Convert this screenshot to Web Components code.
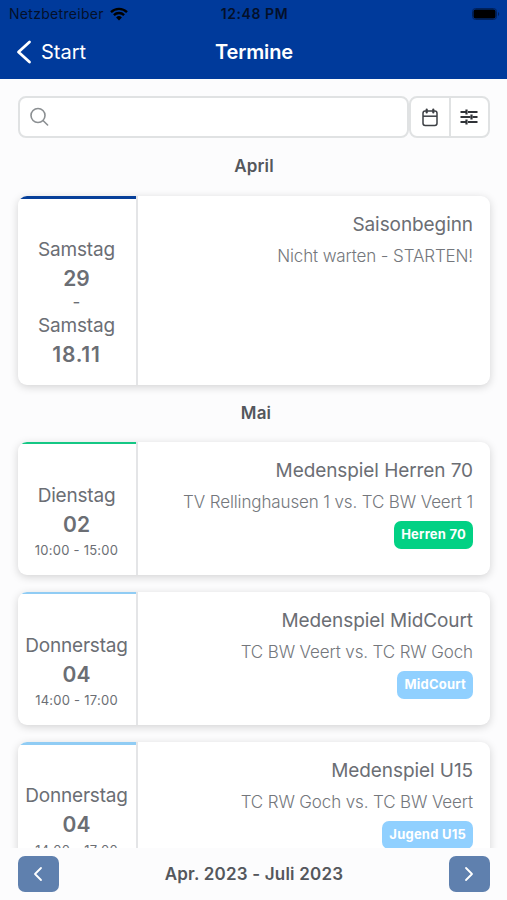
<!DOCTYPE html>
<html lang="de">
<head>
<meta charset="utf-8">
<meta name="viewport" content="width=device-width, initial-scale=1">
<title>Termine</title>
<style>
  html, body {
    margin: 0;
    height: 100%;
    overflow: hidden;
  }
  body {
    font-family: Inter, "Liberation Sans", sans-serif;
    background: #fcfcfd;
    color: #6b6e74;
  }
</style>
</head>
<body>
<termine-app>
  <status-bar slot="top" carrier="Netzbetreiber" time="12:48 PM"></status-bar>
  <nav-bar slot="top" back="Start">Termine</nav-bar>
  <search-bar></search-bar>
  <month-title>April</month-title>
  <event-card color="#063f99" class="long">
    <event-day slot="date" day="Samstag" number="29"></event-day>
    <event-day slot="date" day="Samstag" number="18.11" until></event-day>
    <span slot="title">Saisonbeginn</span>
    <span slot="text">Nicht warten - STARTEN!</span>
  </event-card>
  <month-title class="next">Mai</month-title>
  <event-card color="#14c784">
    <event-day slot="date" day="Dienstag" number="02" time="10:00 - 15:00"></event-day>
    <span slot="title">Medenspiel Herren 70</span>
    <span slot="text">TV Rellinghausen 1 vs. TC BW Veert 1</span>
    <team-badge slot="badge" color="#02d184">Herren 70</team-badge>
  </event-card>
  <event-card color="#90ccf4">
    <event-day slot="date" day="Donnerstag" number="04" time="14:00 - 17:00"></event-day>
    <span slot="title">Medenspiel MidCourt</span>
    <span slot="text">TC BW Veert vs. TC RW Goch</span>
    <team-badge slot="badge" color="#90d0ff">MidCourt</team-badge>
  </event-card>
  <event-card color="#90ccf4">
    <event-day slot="date" day="Donnerstag" number="04" time="14:00 - 17:00"></event-day>
    <span slot="title">Medenspiel U15</span>
    <span slot="text">TC RW Goch vs. TC BW Veert</span>
    <team-badge slot="badge" color="#90d0ff">Jugend U15</team-badge>
  </event-card>
  <range-bar slot="bottom">Apr. 2023 - Juli 2023</range-bar>
</termine-app>

<script>
class TermineApp extends HTMLElement {
  constructor() {
    super();
    this.attachShadow({mode: 'open'}).innerHTML = `
      <style>
        :host {
          display: flex;
          flex-direction: column;
          height: 100vh;
        }
        header {
          height: 79px;
          flex: none;
          background: #003a9b;
        }
        main {
          flex: 1;
          min-height: 0;
          overflow: hidden;
          padding: 17px 17px 0 18px;
        }
      </style>
      <header><slot name="top"></slot></header>
      <main><slot></slot></main>
      <slot name="bottom"></slot>
    `;
  }
}
customElements.define('termine-app', TermineApp);

class StatusBar extends HTMLElement {
  constructor() {
    super();
    this.attachShadow({mode: 'open'}).innerHTML = `
      <style>
        :host {
          display: grid;
          grid-template-columns: 1fr auto 1fr;
          align-items: center;
          height: 27px;
          padding: 0 7px 0 9px;
          color: #04102a;
          font-size: 14px;
        }
        .carrier {
          display: flex;
          align-items: center;
          gap: 6px;
          letter-spacing: .3px;
        }
        .time {
          font-weight: 600;
          letter-spacing: .55px;
        }
        .battery {
          justify-self: end;
        }
        svg {
          display: block;
        }
      </style>
      <div class="carrier">
        <span id="carrier"></span>
        <svg width="18" height="14" viewBox="0 0 18 14" fill="none" stroke="#000" stroke-width="2.3">
          <path d="M1 5.1a11.3 11.3 0 0 1 16 0M3.9 8.1a7.2 7.2 0 0 1 10.2 0"/>
          <path d="M9 13.4 6.1 10.5a4.1 4.1 0 0 1 5.8 0z" fill="#000" stroke="none"/>
        </svg>
      </div>
      <span class="time" id="time"></span>
      <svg class="battery" width="28" height="12" viewBox="0 0 28 12">
        <rect x=".5" y=".5" width="24" height="11" rx="3" fill="none" stroke="#00215c" stroke-width="1"/>
        <rect x="1.5" y="1.5" width="22" height="9" rx="2" fill="#000"/>
        <path d="M26 4v4c1.6-.7 1.6-3.3 0-4z" fill="#00215c"/>
      </svg>
    `;
  }
  connectedCallback() {
    this.shadowRoot.getElementById('carrier').textContent = this.getAttribute('carrier');
    this.shadowRoot.getElementById('time').textContent = this.getAttribute('time');
  }
}
customElements.define('status-bar', StatusBar);

class NavBar extends HTMLElement {
  constructor() {
    super();
    this.attachShadow({mode: 'open'}).innerHTML = `
      <style>
        :host {
          display: grid;
          grid-template-columns: 1fr auto 1fr;
          align-items: center;
          height: 50px;
          padding: 0 15px 0 16px;
          color: #fff;
          font-size: 20px;
        }
        .back {
          display: flex;
          align-items: center;
          gap: 9px;
        }
        .title {
          font-weight: 600;
          letter-spacing: -.15px;
        }
      </style>
      <div class="back">
        <svg width="16" height="24" viewBox="0 0 16 24" fill="none" stroke="#fff" stroke-width="2.8" stroke-linecap="round" stroke-linejoin="round">
          <path d="M13.500 2 2.500 12l11 10"/>
        </svg>
        <span id="back"></span>
      </div>
      <span class="title"><slot></slot></span>
    `;
  }
  connectedCallback() {
    this.shadowRoot.getElementById('back').textContent = this.getAttribute('back');
  }
}
customElements.define('nav-bar', NavBar);

class SearchBar extends HTMLElement {
  constructor() {
    super();
    this.attachShadow({mode: 'open'}).innerHTML = `
      <style>
        :host {
          display: flex;
          height: 42px;
        }
        .field, .buttons {
          box-sizing: border-box;
          display: flex;
          align-items: center;
          border: 2px solid #e0e2e3;
          border-radius: 8px;
          background: #fff;
        }
        .field {
          flex: 1;
          padding-left: 10px;
        }
        .buttons {
          width: 81px;
        }
        .buttons span {
          flex: 1;
          height: 100%;
          display: grid;
          place-items: center;
        }
        .buttons span + span {
          border-left: 2px solid #e0e2e3;
        }
      </style>
      <div class="field">
        <svg width="20" height="20" viewBox="0 0 20 20" fill="none" stroke="#8b8f92" stroke-width="1.6" stroke-linecap="round">
          <circle cx="8" cy="8.5" r="7"/>
          <path d="m13 13.5 4.600 4.500"/>
        </svg>
      </div>
      <div class="buttons">
        <span>
          <svg width="16" height="19" viewBox="0 0 16 19" fill="none" stroke="#3d4045" stroke-width="1.5">
            <rect x="1" y="3" width="14" height="14.400" rx="2.200"/>
            <path d="M1 8.200h14"/>
            <path d="M4.700 1.500v3M11.300 1.500v3" stroke-width="2.200" stroke-linecap="round"/>
          </svg>
        </span>
        <span>
          <svg width="18" height="16" viewBox="0 0 18 16" fill="none" stroke="#303338" stroke-width="1.800">
            <path d="M.5 3h5.500M8 3h9.500M.5 8h10M12.500 8h5M.5 13h5.500M8 13h9.500"/>
            <path d="M6.500 .5v5M11.500 5.500v5M6.500 10.500v5" stroke-width="2.200"/>
          </svg>
        </span>
      </div>
    `;
  }
}
customElements.define('search-bar', SearchBar);

class MonthTitle extends HTMLElement {
  constructor() {
    super();
    this.attachShadow({mode: 'open'}).innerHTML = `
      <style>
        :host {
          display: block;
          height: 58px;
          line-height: 57px;
          text-align: center;
          font-size: 17px;
          font-weight: 600;
          letter-spacing: .15px;
          color: #54575c;
        }
        :host(.next) {
          height: 56.500px;
          padding-left: 4px;
        }
      </style>
      <slot></slot>
    `;
  }
}
customElements.define('month-title', MonthTitle);

class EventCard extends HTMLElement {
  constructor() {
    super();
    this.attachShadow({mode: 'open'}).innerHTML = `
      <style>
        :host {
          display: flex;
          box-sizing: border-box;
          height: 133px;
          margin-bottom: 17.400px;
          border-radius: 9px;
          background: #fff;
          box-shadow: 0 2px 8px rgba(0, 0, 0, .17);
          overflow: hidden;
        }
        :host(.long) {
          height: 189px;
          margin-bottom: 0;
        }
        .date {
          box-sizing: border-box;
          width: 120px;
          flex: none;
          border-right: 2px solid #e4e5e7;
          display: flex;
          flex-direction: column;
          padding-right: 1px;
        }
        .date::before {
          content: '';
          height: 2.500px;
          margin: 0 -1px 36.500px 0;
          background: var(--accent);
        }
        .info {
          flex: 1;
          display: flex;
          flex-direction: column;
          align-items: flex-end;
          padding: 15px 17px 0 0;
          text-align: right;
          white-space: nowrap;
        }
        .title {
          line-height: 28px;
          font-size: 19px;
          letter-spacing: -.08px;
        }
        .text {
          margin-top: 4px;
          line-height: 26px;
          font-size: 17px;
          font-weight: 300;
          letter-spacing: -.13px;
          color: #74777c;
        }
        .badge {
          margin-top: 6px;
        }
      </style>
      <div class="date"><slot name="date"></slot></div>
      <div class="info">
        <div class="title"><slot name="title"></slot></div>
        <div class="text"><slot name="text"></slot></div>
        <div class="badge"><slot name="badge"></slot></div>
      </div>
    `;
  }
  connectedCallback() {
    this.style.setProperty('--accent', this.getAttribute('color'));
  }
}
customElements.define('event-card', EventCard);

class EventDay extends HTMLElement {
  constructor() {
    super();
    this.attachShadow({mode: 'open'}).innerHTML = `
      <style>
        :host {
          display: flex;
          flex-direction: column;
          align-items: center;
          white-space: nowrap;
        }
        .until {
          display: none;
          line-height: 18px;
          font-size: 17px;
        }
        :host([until]) .until {
          display: block;
        }
        .day {
          line-height: 29px;
          font-size: 19px;
          letter-spacing: -.2px;
        }
        .number {
          line-height: 29px;
          font-size: 21px;
          font-weight: 600;
        }
        :host([until]) .number {
          letter-spacing: .8px;
        }
        .time {
          line-height: 22px;
          font-size: 13px;
          letter-spacing: .25px;
        }
      </style>
      <span class="until">-</span>
      <span class="day"></span>
      <span class="number"></span>
    `;
  }
  connectedCallback() {
    this.shadowRoot.querySelector('.day').textContent = this.getAttribute('day');
    this.shadowRoot.querySelector('.number').textContent = this.getAttribute('number');
    if (this.hasAttribute('time')) {
      const time = document.createElement('span');
      time.className = 'time';
      time.textContent = this.getAttribute('time');
      this.shadowRoot.append(time);
    }
  }
}
customElements.define('event-day', EventDay);

class TeamBadge extends HTMLElement {
  constructor() {
    super();
    this.attachShadow({mode: 'open'}).innerHTML = `
      <style>
        :host {
          display: block;
          height: 28px;
          padding: 0 7px;
          border-radius: 7px;
          background: var(--badge);
          color: #fff;
          line-height: 27px;
          font-size: 13px;
          font-weight: 700;
          letter-spacing: .22px;
        }
      </style>
      <slot></slot>
    `;
  }
  connectedCallback() {
    this.style.setProperty('--badge', this.getAttribute('color'));
  }
}
customElements.define('team-badge', TeamBadge);

class RangeBar extends HTMLElement {
  constructor() {
    super();
    this.attachShadow({mode: 'open'}).innerHTML = `
      <style>
        :host {
          box-sizing: border-box;
          flex: none;
          display: flex;
          align-items: center;
          justify-content: space-between;
          height: 52px;
          padding: 0 17px 0 18px;
          background: #fcfcfd;
          font-size: 17px;
          font-weight: 600;
          letter-spacing: .2px;
          color: #54575c;
        }
        .button {
          width: 41px;
          height: 36px;
          border-radius: 7px;
          background: #5f80ae;
          display: grid;
          place-items: center;
        }
        svg {
          fill: none;
          stroke: #fff;
          stroke-width: 1.800;
          stroke-linecap: round;
          stroke-linejoin: round;
        }
      </style>
      <span class="button"><svg width="12" height="16" viewBox="0 0 12 16"><path d="M8 2 2 8l6 6"/></svg></span>
      <slot></slot>
      <span class="button"><svg width="10" height="16" viewBox="0 0 10 16"><path d="m2 2 6 6-6 6"/></svg></span>
    `;
  }
}
customElements.define('range-bar', RangeBar);
</script>
</body>
</html>
